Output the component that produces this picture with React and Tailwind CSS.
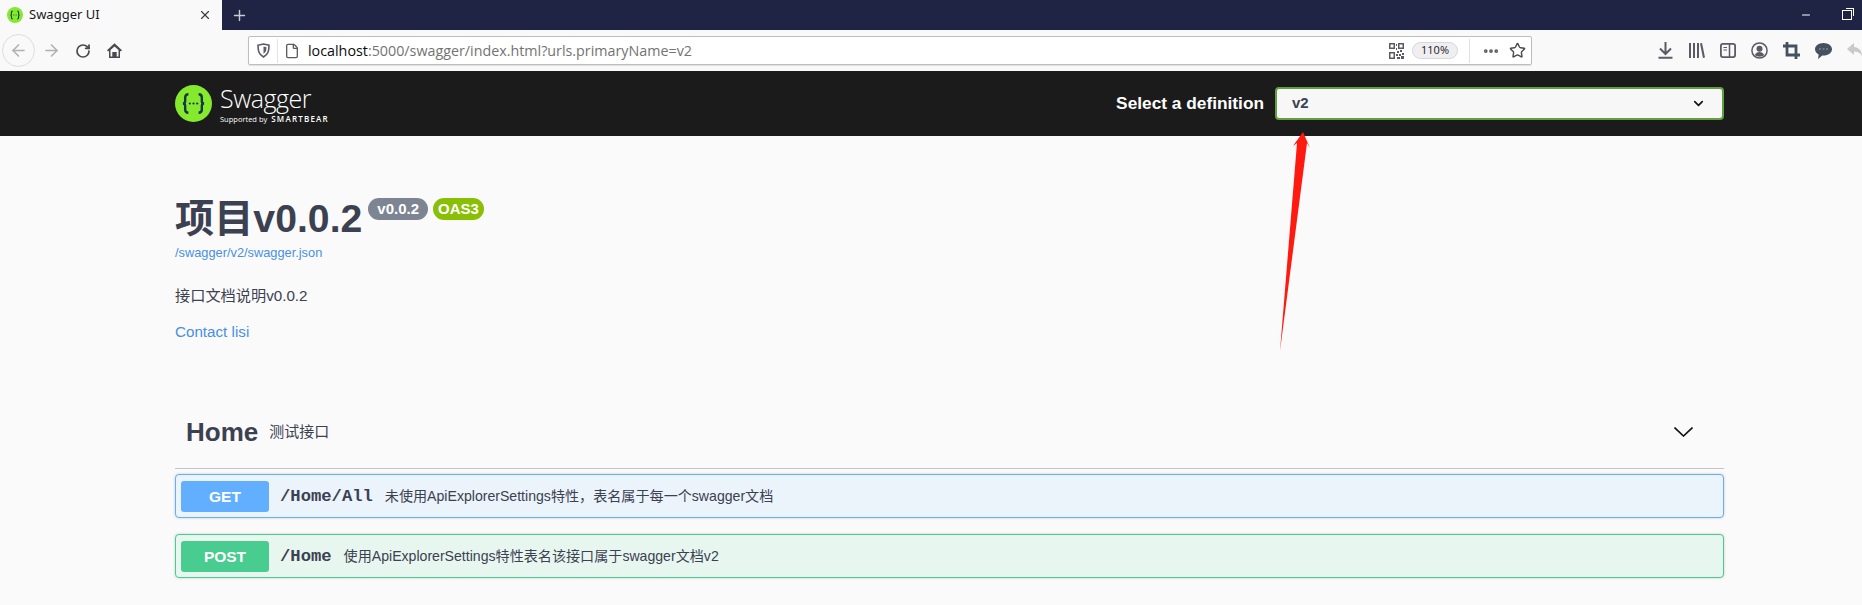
import { ArrowLeft, ArrowRight, RotateCw, File, Ellipsis, Star, ChevronDown, X, Plus, Minus } from 'lucide-react';

const sans = "font-['Liberation_Sans','Noto_Sans_CJK_SC',sans-serif]";

const SwaggerLogo = ({ size }) => (
  <svg width={size} height={size} viewBox="0 0 40 40" className="shrink-0">
    <circle cx="20" cy="20" r="20" fill="#85ea2d" />
    <path d="M14.500 10c-2.500 0-3.500 1-3.500 3.500v4c0 1.500-.8 2.500-2.500 2.500c1.700 0 2.500 1 2.500 2.500v4c0 2.500 1 3.500 3.500 3.500" fill="none" stroke="#173647" strokeWidth="2.600" />
    <path d="M25.500 10c2.500 0 3.500 1 3.500 3.500v4c0 1.500.8 2.500 2.500 2.500c-1.700 0-2.500 1-2.500 2.500v4c0 2.500-1 3.500-3.500 3.500" fill="none" stroke="#173647" strokeWidth="2.600" />
    <circle cx="16" cy="20" r="1.200" fill="#173647" />
    <circle cx="20" cy="20" r="1.200" fill="#173647" />
    <circle cx="24" cy="20" r="1.200" fill="#173647" />
  </svg>
);

const ShieldIcon = () => (
  <svg width="13" height="15" viewBox="0 0 13 15" fill="none" stroke="#5b5b66" strokeWidth="1.600">
    <path d="M1 2.200 6.500 1 12 2.200c0 5-.5 9-5.500 11.800C1.500 11.200 1 7.200 1 2.200z" />
    <path d="M6.500 3.500 9.500 4.200c0 3-.5 4.800-3 6.500z" fill="#5b5b66" stroke="none" />
  </svg>
);

const QrIcon = () => (
  <svg width="15" height="16" viewBox="0 0 15 16" fill="#5b5b66">
    <path d="M0 0h6v6H0zM1.500 1.500v3h3v-3zM9 0h6v6H9zM10.500 1.500v3h3v-3zM0 9h6v7H0zM1.500 10.500v4h3v-4z" fillRule="evenodd" />
    <path d="M7 1h1v2H7zM7 5h1v2H7zM8 8h2v2H8zM11 7h2v2h-2zM13 10h2v2h-2zM10 11h2v2h-2zM7 11h2v2H7zM12 13h3v3h-3zM8 14h3v2H8z" />
  </svg>
);

const HomeIcon = () => (
  <svg width="17" height="17" viewBox="0 0 17 17" className="shrink-0">
    <path d="M8.500 1.200 1 8.200l1.200 1.200L3 8.700V16h11V8.700l.8.7L16 8.200z" fill="#4a4a4f" />
    <path d="M8.500 4.500 12.500 8v6.500h-1.800V10H6.300v4.500H4.500V8z" fill="#f9f9fa" />
    <path d="M7.500 11h2v3.500h-2z" fill="#4a4a4f" />
  </svg>
);

const DownloadIcon = () => (
  <svg width="17" height="17" viewBox="0 0 17 17" fill="none" stroke="#5b5b66" strokeWidth="2" className="shrink-0">
    <path d="M8.500 0v11M3 6.500 8.500 12 14 6.500M1.500 15.800h14" />
  </svg>
);

const LibraryIcon = () => (
  <svg width="16" height="15" viewBox="0 0 16 15" fill="#5b5b66" className="shrink-0">
    <path d="M0 0h2v15H0zM4 0h2v15H4zM8 0h2v15H8zM11 .500l2-.500 3 14.500-2 .500z" />
  </svg>
);

const SidebarIcon = () => (
  <svg width="16" height="15" viewBox="0 0 16 15" fill="none" stroke="#5b5b66" className="shrink-0">
    <rect x=".900" y=".900" width="14.200" height="13.200" rx="2" strokeWidth="1.800" />
    <path d="M9.500 1v13" strokeWidth="1.500" />
    <path d="M3.500 4.500h3.500M3.500 7h3.500" strokeWidth="1.200" />
  </svg>
);

const AccountIcon = () => (
  <svg width="17" height="17" viewBox="0 0 17 17" fill="none" stroke="#5b5b66" className="shrink-0">
    <circle cx="8.500" cy="8.500" r="7.600" strokeWidth="1.500" />
    <circle cx="8.500" cy="6.800" r="3" fill="#5b5b66" stroke="none" />
    <path d="M3.800 13c1-2 2.500-3 4.700-3s3.700 1 4.700 3c-1.300 1.200-2.900 1.700-4.700 1.700S5.100 14.200 3.800 13z" fill="#5b5b66" stroke="none" />
  </svg>
);

const CropIcon = () => (
  <svg width="17" height="17" viewBox="0 0 17 17" fill="none" stroke="#45515f" strokeWidth="2.800" className="shrink-0">
    <path d="M4 0v13h13M0 4h13v13" />
  </svg>
);

const ChatIcon = () => (
  <svg width="17" height="16" viewBox="0 0 17 16" className="shrink-0">
    <path d="M8.500 0C3.800 0 0 2.800 0 6.300c0 2.200 1.500 4.100 3.700 5.200L3 16l4.300-3.500c.4.100.8.100 1.200.1 4.700 0 8.500-2.800 8.500-6.300S13.200 0 8.500 0z" fill="#45515f" />
    <path d="M4 6h2M7.500 6h2M11 6h2" stroke="#7b8794" strokeWidth="1.400" />
  </svg>
);

const ReplyIcon = () => (
  <svg width="17" height="15" viewBox="0 0 17 15" fill="#c9c9cb" className="shrink-0">
    <path d="M7 0 0 6l7 6V8.500c3.500 0 6 1 8 4.500 0-5-3-8.500-8-9z" />
  </svg>
);

const OpBlock = ({ method, path, summary, badge, border, bg, shadow }) => (
  <div className={`flex items-center h-[44px] border rounded-[4px] pl-[5px] ${border} ${bg} ${shadow}`}>
    <span className={`w-[88px] h-[31px] pt-[1px] rounded-[3px] flex items-center justify-center text-white font-bold text-[15.500px] ${badge}`}>{method}</span>
    <span className="ml-[11px] pt-[2px] font-['Liberation_Mono',monospace] font-bold text-[17.200px] text-[#3b4151]">{path}</span>
    <span className="ml-[12px] pt-[2px] text-[14.100px] text-[#3b4151]">{summary}</span>
  </div>
);

export default function App() {
  return (
    <div className={`relative h-[605px] overflow-hidden bg-[#fafafa] ${sans}`}>
      {/* Tab strip */}
      <div className="h-[30px] bg-[#1f2444] flex items-center text-white">
        <div className="w-[222px] h-full bg-[#f9f9fa] flex items-center pl-[7px] pr-[10px] font-['Noto_Sans',sans-serif] text-[13px] text-[#18181a]">
          <SwaggerLogo size={16} />
          <span className="ml-[6px] flex-1">Swagger UI</span>
          <X size={14} color="#3d3d42" />
        </div>
        <Plus size={17} color="#c9cad2" className="ml-[9px]" />
        <div className="ml-auto flex items-center gap-[30px] pr-[10px]">
          <Minus size={12} color="#ffffff" />
          <div className="relative w-[10px] h-[10px] border border-white">
            <div className="absolute -top-[3px] -right-[3px] w-[8px] h-[8px] border-t border-r border-white" />
          </div>
        </div>
      </div>

      {/* Browser toolbar */}
      <div className="h-[41px] bg-[#f9f9fa] flex items-center">
        <div className="ml-[2px] w-[33px] h-[33px] shrink-0 rounded-full border border-[#dcdcde] flex items-center justify-center">
          <ArrowLeft size={19} color="#b1b1b3" />
        </div>
        <ArrowRight size={19} color="#b1b1b3" className="ml-[7px] shrink-0" />
        <RotateCw size={16} color="#4a4a4f" strokeWidth={2.600} className="ml-[14px] shrink-0" />
        <div className="ml-[15px]"><HomeIcon /></div>
        <div className="ml-[125px] w-[1284px] shrink-0 h-[29px] bg-white border border-[#bebebe] rounded-[2px] flex items-center shadow-[0_1px_1px_rgba(0,0,0,0.1)]">
          <div className="ml-[8px]"><ShieldIcon /></div>
          <div className="ml-[7px] w-px h-[24px] bg-[#e4e4e6]" />
          <File size={16} color="#5b5b66" strokeWidth={2} className="ml-[6px]" />
          <span className="ml-[8px] font-['Open_Sans',sans-serif] text-[14.300px] text-[#737373] whitespace-nowrap">
            <span className="text-[#0c0c0d]">localhost</span>:5000/swagger/index.html?urls.primaryName=v2
          </span>
          <div className="ml-auto flex items-center">
            <QrIcon />
            <span className="ml-[8px] w-[46px] h-[17px] rounded-full bg-[#efeff1] border border-[#d7d7db] flex items-center justify-center font-['Open_Sans',sans-serif] text-[11px] text-[#18181a]">110%</span>
            <div className="ml-[11px] w-px h-[24px] bg-[#e0e0e2]" />
            <Ellipsis size={18} color="#5b5b66" strokeWidth={3} className="ml-[12px]" />
            <Star size={17} color="#4a4a4f" strokeWidth={2} className="ml-[9px] mr-[5px]" />
          </div>
        </div>
        <div className="ml-[125px] flex items-center gap-[15px] shrink-0">
          <DownloadIcon />
          <LibraryIcon />
          <SidebarIcon />
          <AccountIcon />
          <CropIcon />
          <ChatIcon />
          <ReplyIcon />
        </div>
      </div>

      {/* Swagger topbar */}
      <div className="h-[65px] bg-[#1b1b1b]">
        <div className="mx-[175px] w-[1549px] h-full flex items-center justify-between">
          <div className="flex items-center">
            <SwaggerLogo size={37} />
            <div className="ml-[8px] text-white">
              <div className="font-['Open_Sans',sans-serif] font-light text-[25px] leading-[28px] tracking-[-0.5px]">Swagger</div>
              <div className="flex items-baseline mt-[2px] leading-[9px]">
                <span className="font-['Open_Sans',sans-serif] text-[7.500px]">Supported by</span>
                <span className="ml-[4px] font-['Open_Sans',sans-serif] font-semibold text-[8px] tracking-[1.200px]">SMARTBEAR</span>
              </div>
            </div>
          </div>
          <div className="flex items-center">
            <span className="text-white font-bold text-[17.300px]">Select a definition</span>
            <div className="ml-[11px] w-[449px] h-[33px] bg-[#f7f7f7] border-2 border-[#62a03f] rounded-[4px] flex items-center justify-between pl-[15px] pr-[16px]">
              <span className="font-bold text-[15px] text-[#3b4151]">v2</span>
              <ChevronDown size={15} color="#111111" strokeWidth={2.600} />
            </div>
          </div>
        </div>
      </div>

      {/* Page content */}
      <div className="mx-[175px] w-[1549px]">
        <div className="pt-[58px]">
          <div className="flex items-start">
            <h1 className="font-bold text-[39.200px] leading-[50px] text-[#3b4151]">项目v0.0.2</h1>
            <span className="mt-[4px] ml-[6px] h-[22px] px-[9px] rounded-full bg-[#7d8492] text-white font-bold text-[15px] leading-[22px]">v0.0.2</span>
            <span className="mt-[4px] ml-[5px] h-[22px] px-[5px] rounded-full bg-[#89bf04] text-white font-bold text-[15px] leading-[22px]">OAS3</span>
          </div>
          <a className="block mt-[1px] text-[12.800px] leading-[16px] text-[#4990e2]">/swagger/v2/swagger.json</a>
          <p className="mt-[25px] text-[15.200px] leading-[20px] text-[#3b4151]">接口文档说明v0.0.2</p>
          <a className="block mt-[16px] text-[15.200px] leading-[20px] text-[#4990e2]">Contact lisi</a>
        </div>

        <div className="mt-[73px] h-[54px] border-b border-[#c4c4c6] flex items-start pl-[11px] pr-[31px]">
          <span className="font-bold text-[26px] leading-[34px] text-[#3b4151]">Home</span>
          <span className="ml-[11px] text-[15px] leading-[34px] text-[#3b4151]">测试接口</span>
          <svg width="19" height="10" viewBox="0 0 19 10" className="ml-auto mt-[12px]" fill="none" stroke="#111111" strokeWidth="1.600">
            <path d="M.500.500 9.500 9 18.500.500" />
          </svg>
        </div>

        <div className="mt-[5px] flex flex-col gap-[16px]">
          <OpBlock
            method="GET"
            path="/Home/All"
            summary="未使用ApiExplorerSettings特性，表名属于每一个swagger文档"
            badge="bg-[#61affe]"
            border="border-[#61affe]"
            bg="bg-[#ebf3fb]"
            shadow="shadow-[0_0_3px_rgba(0,0,0,0.19)]"
          />
          <OpBlock
            method="POST"
            path="/Home"
            summary="使用ApiExplorerSettings特性表名该接口属于swagger文档v2"
            badge="bg-[#49cc90]"
            border="border-[#49cc90]"
            bg="bg-[#e8f6f0]"
            shadow="shadow-[0_0_3px_rgba(0,0,0,0.19)]"
          />
        </div>
      </div>

      {/* Red annotation arrow */}
      <svg width="60" height="230" viewBox="0 0 60 230" className="absolute left-[1270px] top-[125px]">
        <path d="M33 7 40 23 37 18 10 226 27 18 23 21z" fill="#ff1a0f" />
      </svg>
    </div>
  );
}
